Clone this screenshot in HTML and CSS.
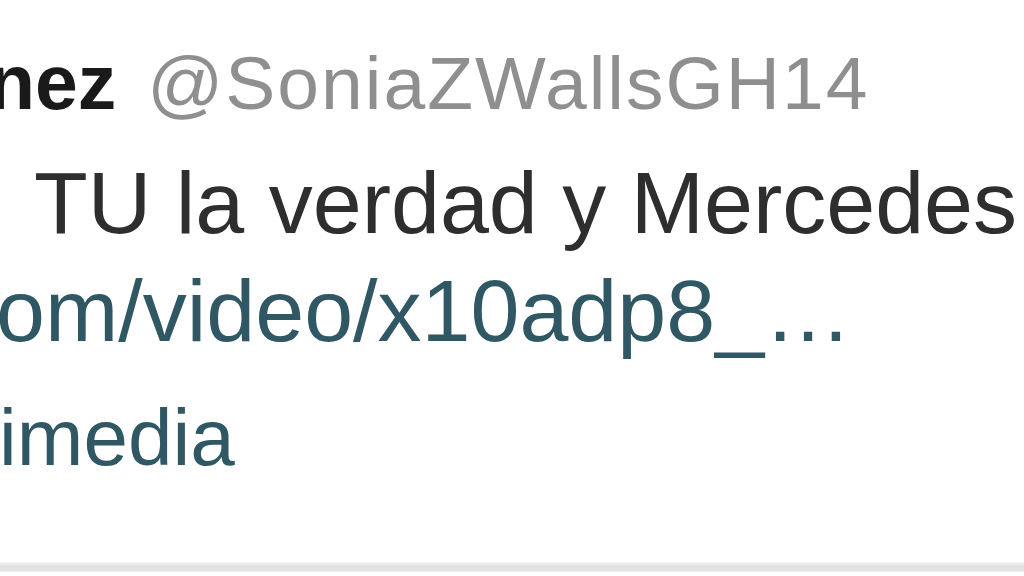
FILE: index.html
```html
<!DOCTYPE html>
<html lang="es">
<head>
    <meta charset="UTF-8">
    <title>Tweet</title>
    <link rel="stylesheet" href="styles.css">
</head>
<body>
    <div class="tweet">
        <!-- header: name + handle -->
        <div class="tweet-header">
            <span class="name">nez</span>
            <span class="handle">@SoniaZWallsGH14</span>
        </div>

        <p class="tweet-text">TU la verdad y Mercedes</p>
        <p class="tweet-link">om/video/x10adp8_…</p>
        <p class="tweet-link tweet-via">imedia</p>
    </div>
    <div class="divider"></div>
</body>
</html>
```

FILE: styles.css
```css
body {
    margin: 0;
    background-color: #fff;
    font-family: "Liberation Sans", Arial, sans-serif;
    width: 1024px;
    height: 576px;
    overflow: hidden;
}

.tweet {
    height: 562px;
    overflow: hidden;
}

.tweet-header {
    margin-top: 44px;
    font-size: 75px;
    line-height: 1;
    white-space: nowrap;
}

.name {
    display: inline-block;
    margin-left: -12px;
    font-size: 77px;
    font-weight: bold;
    color: #1a1a1a;
}

.handle {
    margin-left: 10px;
    letter-spacing: 2px;
    color: #8f8f8f;
}

.tweet-text,
.tweet-link {
    margin: 0;
    font-size: 88px;
    line-height: 1;
    white-space: nowrap;
}

.tweet-text {
    margin-top: 38px;
    margin-left: 34px;
    color: #2e2e2e;
}

.tweet-link {
    margin-top: 20px;
    margin-left: -4px;
    color: #305864;
}

.tweet-via {
    margin-top: 43px;
    margin-left: -1px;
    font-size: 80px;
}

.divider {
    height: 10px;
    background: linear-gradient(#f6f6f6, #e2e2e2 40%, #e2e2e2 80%, #f2f2f2);
}
```
